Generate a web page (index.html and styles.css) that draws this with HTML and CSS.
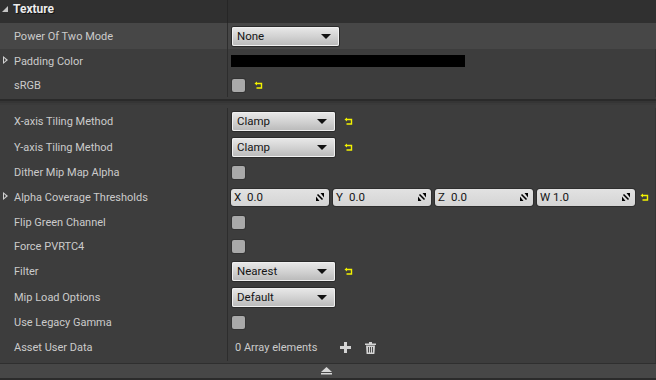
FILE: index.html
```html
<!DOCTYPE html>
<html>
<head>
<meta charset="utf-8">
<link rel="stylesheet" href="styles.css">
</head>
<body>
<div class="panel">
  <div class="cat-header">
    <div class="cat-name"><span class="cat-arrow"></span><span class="cat-title">Texture</span></div>
    <div class="cat-value"></div>
  </div>

  <div class="group">
    <div class="row h26 hl">
      <div class="name">Power Of Two Mode</div>
      <div class="value">
        <div class="combo w107"><span>None</span><span class="caret"></span></div>
      </div>
    </div>
    <div class="row h24">
      <div class="name"><span class="expander"></span>Padding Color</div>
      <div class="value"><div class="colorbar"></div></div>
    </div>
    <div class="row h24">
      <div class="name">sRGB</div>
      <div class="value">
        <div class="check"></div>
        <svg class="reset" width="9" height="9" viewBox="0 0 9 9"><path d="M2.5 2.5 H7.5 V7 H2.5" fill="none" stroke="#f2f200" stroke-width="1.4"/><path d="M0.5 2.5 L3 0.5 V4.5 Z" fill="#f2f200"/></svg>
      </div>
    </div>
  </div>

  <div class="group-sep"></div>

  <div class="group">
    <div class="row h26">
      <div class="name">X-axis Tiling Method</div>
      <div class="value">
        <div class="combo w103"><span>Clamp</span><span class="caret"></span></div>
        <svg class="reset" width="9" height="9" viewBox="0 0 9 9"><path d="M2.5 2.5 H7.5 V7 H2.5" fill="none" stroke="#f2f200" stroke-width="1.4"/><path d="M0.5 2.5 L3 0.5 V4.5 Z" fill="#f2f200"/></svg>
      </div>
    </div>
    <div class="row h26">
      <div class="name">Y-axis Tiling Method</div>
      <div class="value">
        <div class="combo w103"><span>Clamp</span><span class="caret"></span></div>
        <svg class="reset" width="9" height="9" viewBox="0 0 9 9"><path d="M2.5 2.5 H7.5 V7 H2.5" fill="none" stroke="#f2f200" stroke-width="1.4"/><path d="M0.5 2.5 L3 0.5 V4.5 Z" fill="#f2f200"/></svg>
      </div>
    </div>
    <div class="row h24">
      <div class="name">Dither Mip Map Alpha</div>
      <div class="value"><div class="check"></div></div>
    </div>
    <div class="row h26">
      <div class="name"><span class="expander"></span>Alpha Coverage Thresholds</div>
      <div class="value vec">
        <div class="vfield"><span class="vlab">X</span><span class="vval">0.0</span><svg class="spin" width="8" height="8" viewBox="0 0 8 8"><path d="M0 8 V3.5 L3.5 8 Z M8 0 V4.5 L4.5 0 Z" fill="#000"/><path d="M1.5 1.5 L6.5 6.5" stroke="#000" stroke-width="1.6"/></svg></div>
        <div class="vfield"><span class="vlab">Y</span><span class="vval">0.0</span><svg class="spin" width="8" height="8" viewBox="0 0 8 8"><path d="M0 8 V3.5 L3.5 8 Z M8 0 V4.5 L4.5 0 Z" fill="#000"/><path d="M1.5 1.5 L6.5 6.5" stroke="#000" stroke-width="1.6"/></svg></div>
        <div class="vfield"><span class="vlab">Z</span><span class="vval">0.0</span><svg class="spin" width="8" height="8" viewBox="0 0 8 8"><path d="M0 8 V3.5 L3.5 8 Z M8 0 V4.5 L4.5 0 Z" fill="#000"/><path d="M1.5 1.5 L6.5 6.5" stroke="#000" stroke-width="1.6"/></svg></div>
        <div class="vfield"><span class="vlab">W</span><span class="vval">1.0</span><svg class="spin" width="8" height="8" viewBox="0 0 8 8"><path d="M0 8 V3.5 L3.5 8 Z M8 0 V4.5 L4.5 0 Z" fill="#000"/><path d="M1.5 1.5 L6.5 6.5" stroke="#000" stroke-width="1.6"/></svg></div>
        <svg class="reset" width="9" height="9" viewBox="0 0 9 9"><path d="M2.5 2.5 H7.5 V7 H2.5" fill="none" stroke="#f2f200" stroke-width="1.4"/><path d="M0.5 2.5 L3 0.5 V4.5 Z" fill="#f2f200"/></svg>
      </div>
    </div>
    <div class="row h24">
      <div class="name">Flip Green Channel</div>
      <div class="value"><div class="check"></div></div>
    </div>
    <div class="row h24">
      <div class="name">Force PVRTC4</div>
      <div class="value"><div class="check"></div></div>
    </div>
    <div class="row h26">
      <div class="name">Filter</div>
      <div class="value">
        <div class="combo w103"><span>Nearest</span><span class="caret"></span></div>
        <svg class="reset" width="9" height="9" viewBox="0 0 9 9"><path d="M2.5 2.5 H7.5 V7 H2.5" fill="none" stroke="#f2f200" stroke-width="1.4"/><path d="M0.5 2.5 L3 0.5 V4.5 Z" fill="#f2f200"/></svg>
      </div>
    </div>
    <div class="row h26">
      <div class="name">Mip Load Options</div>
      <div class="value">
        <div class="combo w103"><span>Default</span><span class="caret"></span></div>
      </div>
    </div>
    <div class="row h24">
      <div class="name">Use Legacy Gamma</div>
      <div class="value"><div class="check"></div></div>
    </div>
    <div class="row h27">
      <div class="name">Asset User Data</div>
      <div class="value arr">
        <span class="arr-text">0 Array elements</span>
        <svg class="plus" width="11" height="11" viewBox="0 0 11 11"><path d="M4 0 H7 V4 H11 V7 H7 V11 H4 V7 H0 V4 H4 Z" fill="#d4d4d4"/></svg>
        <svg class="trash" width="11" height="12" viewBox="0 0 11 12"><path d="M0 1.5 H11 V3 H0 Z M4 0 H7 V1.5 H4 Z" fill="#d4d4d4"/><path d="M1 3.5 H10 L9.4 12 H1.6 Z" fill="#d4d4d4"/><path d="M3.5 5 V10.5 M5.5 5 V10.5 M7.5 5 V10.5" stroke="#3d3d3d" stroke-width="0.9"/></svg>
      </div>
    </div>
  </div>

  <div class="filler"></div>
  <div class="bottom-bar">
    <svg width="11" height="8" viewBox="0 0 11 8"><path d="M5.5 0 L11 5 H0 Z" fill="#d8d8d8"/><rect x="0" y="6" width="11" height="1.5" fill="#d8d8d8"/></svg>
  </div>
</div>
</body>
</html>
```

FILE: styles.css
```css
html, body {
  margin: 0;
  padding: 0;
  background: #3d3d3d;
}

body {
  font-family: Roboto, "Noto Sans", "Liberation Sans", sans-serif;
  font-size: 11px;
  color: #cbcbcb;
}

.panel {
  width: 656px;
  height: 380px;
  display: flex;
  flex-direction: column;
  background: #3d3d3d;
  overflow: hidden;
  box-shadow: inset -1px 0 0 #353535;
}

.cat-header {
  height: 23px;
  flex: none;
  display: grid;
  grid-template-columns: 228px 1fr;
  background: #303030;
}

.cat-name {
  display: flex;
  align-items: center;
  border-right: 1px solid #262626;
  position: relative;
}

.cat-arrow {
  position: absolute;
  left: 2px;
  top: 6px;
  width: 0;
  height: 0;
  border-left: 6px solid transparent;
  border-bottom: 6px solid #c4c4c4;
}

.cat-title {
  padding-left: 13px;
  font-weight: bold;
  font-size: 12px;
  color: #ececec;
  text-shadow: 1px 1px 0 #111;
  margin-top: -5px;
}

.group {
  display: flex;
  flex-direction: column;
  flex: none;
}

.group-sep {
  flex: none;
  height: 11px;
  background: linear-gradient(#3d3d3d 0 2px, #2a2a2a 2px 4px, #353535 4px 6px, #3a3a3a 6px 8px, #3d3d3d 8px);
}

.row {
  display: grid;
  grid-template-columns: 228px 1fr;
}

.h24 { height: 24px; }
.h26 { height: 26px; }
.h27 { height: 27px; }

.hl {
  background: #474747;
}

.name {
  position: relative;
  display: flex;
  align-items: center;
  padding-left: 14px;
  border-right: 1px solid #2d2d2d;
  color: #cbcbcb;
  white-space: nowrap;
}

.expander {
  position: absolute;
  left: 3px;
  top: 50%;
  margin-top: -5px;
  width: 4px;
  height: 7px;
}

.expander::before {
  content: "";
  position: absolute;
  left: 0;
  top: 0;
  width: 0;
  height: 0;
  border-top: 4px solid transparent;
  border-bottom: 4px solid transparent;
  border-left: 5px solid #d0d0d0;
}

.expander::after {
  content: "";
  position: absolute;
  left: 1px;
  top: 2px;
  width: 0;
  height: 0;
  border-top: 2px solid transparent;
  border-bottom: 2px solid transparent;
  border-left: 2.5px solid #3d3d3d;
}

.value {
  display: flex;
  align-items: center;
  padding-left: 4px;
  min-width: 0;
}

.combo {
  height: 19px;
  box-sizing: border-box;
  display: flex;
  align-items: center;
  justify-content: space-between;
  padding: 0 8px 0 5px;
  border-radius: 2px;
  background: linear-gradient(#e9e9e9, #d2d2d2 50%, #b9b9b9);
  box-shadow: 0 0 0 1px #2a2a2a, inset 0 0 0 1px #f0f0f0;
  color: #151515;
  font-size: 11.5px;
}

.w107 { width: 107px; }
.w103 { width: 103px; }

.caret {
  width: 0;
  height: 0;
  border-left: 5px solid transparent;
  border-right: 5px solid transparent;
  border-top: 5px solid #111;
}

.reset {
  margin-left: 9px;
  flex: none;
}

.colorbar {
  width: 234px;
  height: 12px;
  background: #000;
  margin-left: -1px;
}

.check {
  width: 13px;
  height: 13px;
  border-radius: 2px;
  background: #a9a9a9;
  box-shadow: 0 0 0 1px #333;
  flex: none;
}

.vec {
  padding-left: 3px;
  gap: 4px;
}

.vfield {
  width: 98px;
  height: 17px;
  box-sizing: border-box;
  border-radius: 3px;
  background: linear-gradient(#e2e2e2, #d4d4d4);
  box-shadow: 0 0 0 1px #2e2e2e;
  display: flex;
  align-items: center;
  padding: 0 5px 0 3px;
  color: #151515;
  font-size: 11.5px;
}

.vlab {
  width: 13px;
}

.vval {
  flex: 1;
}

.spin {
  flex: none;
}

.vec .reset {
  margin-left: 1px;
}

.arr {
  padding-left: 7px;
}

.arr-text {
  color: #cbcbcb;
}

.plus {
  margin-left: 23px;
}

.trash {
  margin-left: 14px;
}

.filler {
  flex: 1;
}

.bottom-bar {
  flex: none;
  height: 14px;
  background: #474747;
  border-top: 1px solid #2f2f2f;
  border-bottom: 2px solid #2b2b2b;
  display: flex;
  align-items: center;
  justify-content: center;
}

.bottom-bar svg {
  margin-left: -4px;
}
```
